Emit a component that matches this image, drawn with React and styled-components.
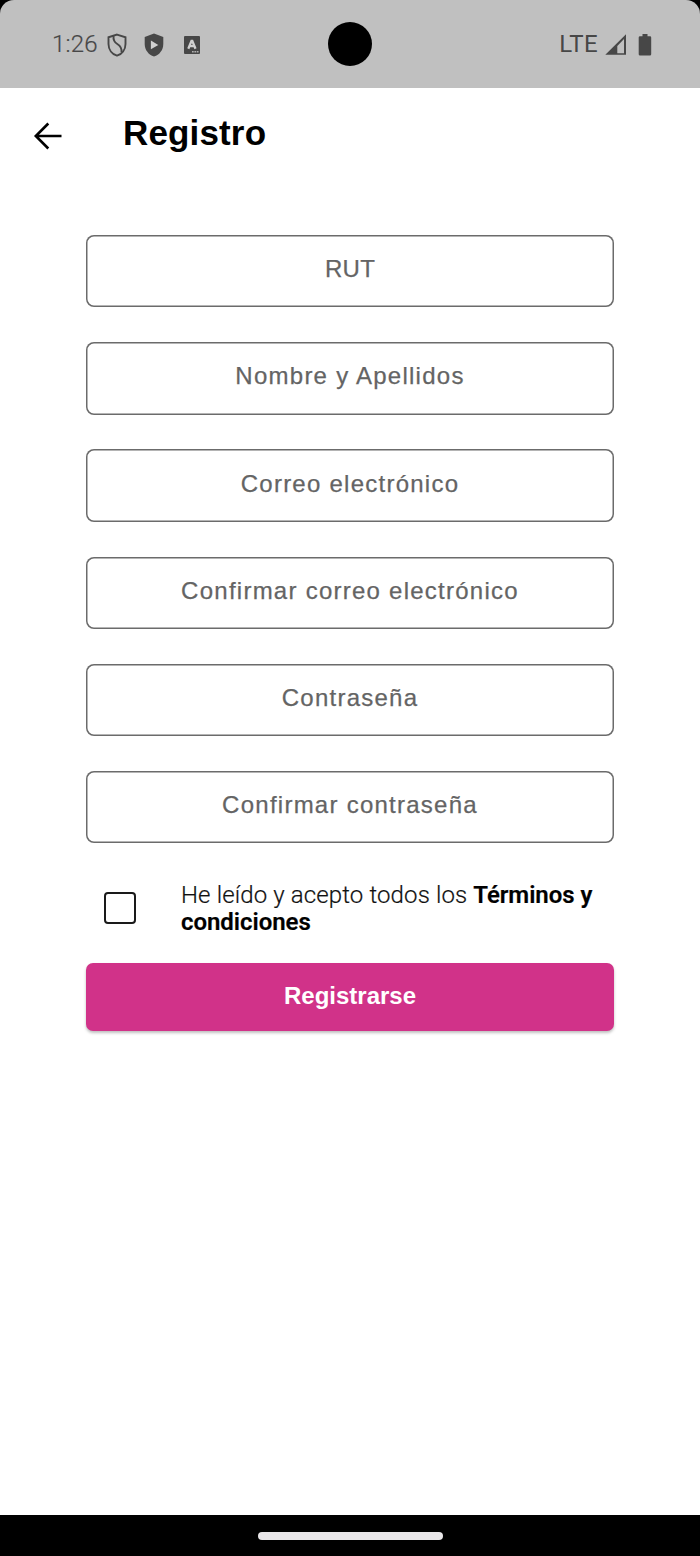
import styled, { createGlobalStyle } from 'styled-components'

const GlobalStyle = createGlobalStyle`
    * {
        box-sizing: border-box;
    }

    body {
        margin: 0;
        background: #000;
    }
`

const Screen = styled.div`
    display: flex;
    flex-direction: column;
    width: 700px;
    height: 1556px;
    overflow: hidden;
    background: #000;
    font-family: "Liberation Sans", Arial, sans-serif;
`

const StatusBar = styled.header`
    display: grid;
    grid-template-columns: 1fr 44px 1fr;
    align-items: center;
    flex: none;
    height: 88px;
    padding: 0 48px 0 52px;
    background: #c0c0c0;
    border-radius: 14px 14px 0 0;
    color: #474747;
    font-family: Roboto, sans-serif;
`

const StatusGroup = styled.div`
    display: flex;
    align-items: center;
    justify-content: ${({ $end }) => ($end ? 'flex-end' : 'flex-start')};

    svg {
        display: block;
        flex: none;
    }
`

const Clock = styled.span`
    width: 55px;
    font-size: 24px;
    font-weight: 300;
    line-height: 28px;
    letter-spacing: 0.2px;
    -webkit-text-stroke: 0.2px #474747;
`

const Network = styled.span`
    margin-right: 7px;
    font-size: 24px;
    line-height: 28px;
    letter-spacing: 0.4px;
`

const Camera = styled.div`
    width: 44px;
    height: 44px;
    margin-left: -2px;
    border-radius: 50%;
    background: #000;
`

const Content = styled.main`
    flex: 1;
    background: #fff;
`

const TopBar = styled.div`
    display: flex;
    align-items: center;
    gap: 60px;
    height: 95px;
    padding-left: 33px;
`

const BackButton = styled.button`
    display: flex;
    width: 30px;
    height: 30px;
    padding: 0;
    border: 0;
    background: none;
`

const Title = styled.h1`
    margin: 0 0 6px;
    color: #000;
    font-size: 35px;
    font-weight: 700;
    line-height: 40px;
    letter-spacing: 0.15px;
`

const Form = styled.div`
    display: flex;
    flex-direction: column;
    width: 528px;
    margin: 52px auto 0;
`

const Fields = styled.div`
    display: flex;
    flex-direction: column;
    gap: 34.8px;
`

const Field = styled.div`
    display: flex;
    align-items: center;
    justify-content: center;
    height: 72.4px;
    padding-bottom: 4px;
    border-radius: 8px;
    box-shadow: inset 0 0 0 1.5px #6b6b6b;
    color: #646464;
    font-size: 24px;
    line-height: 28px;
    letter-spacing: ${({ $tight }) => ($tight ? '0.3px' : '1.25px')};
    -webkit-text-stroke: 0.25px #646464;
`

const Terms = styled.div`
    display: flex;
    align-items: center;
    height: 54px;
    margin-top: 38px;
    padding-left: 18px;
`

const Checkbox = styled.div`
    flex: none;
    width: 32px;
    height: 32px;
    margin-right: 45px;
    border: 2px solid #1a1a1a;
    border-radius: 4px;
`

const TermsText = styled.p`
    margin: 2px 0 0;
    color: #111;
    font-family: Roboto, sans-serif;
    font-size: 24px;
    font-weight: 300;
    line-height: 27px;
    letter-spacing: 0.13px;
    white-space: nowrap;
    -webkit-text-stroke: 0.2px #111;

    b {
        color: #000;
        font-weight: 600;
        letter-spacing: -0.05px;
    }
`

const SubmitButton = styled.button`
    height: 68px;
    margin-top: 28px;
    padding: 0 0 3px;
    border: 0;
    border-radius: 7px;
    background: #d13289;
    box-shadow: 0 2px 3px rgba(0, 0, 0, 0.25);
    color: #fff;
    font-family: inherit;
    font-size: 24px;
    font-weight: 700;
`

const NavBar = styled.footer`
    display: flex;
    align-items: center;
    justify-content: center;
    flex: none;
    height: 41px;
    background: #000;
`

const HomeHandle = styled.div`
    width: 185px;
    height: 8px;
    border-radius: 4px;
    background: #e9e7e9;
`

const campos = [
    'RUT',
    'Nombre y Apellidos',
    'Correo electrónico',
    'Confirmar correo electrónico',
    'Contraseña',
    'Confirmar contraseña',
]

const ShieldOutline = () => (
    <svg width="20" height="24" viewBox="0 0 20 24" fill="none" stroke="#474747" strokeWidth="1.9">
        <path d="M10 1.6 18.5 4.3V11C18.5 16.5 15 21.1 10 22.7 5 21.1 1.5 16.5 1.5 11V4.3Z" />
        <path d="M6.600 3C6 7 7 9 10.300 11 14 13.300 15 15.400 14.500 19.300" />
    </svg>
)

const ShieldPlay = () => (
    <svg width="20" height="24" viewBox="0 0 20 24">
        <path fill="#474747" d="M10 .5 19.3 4V11C19.3 17 15.5 21.8 10 23.5 4.5 21.8.7 17 .7 11V4Z" />
        <path fill="#d0d0d0" d="M6.9 7.5V16.2L14.3 11.9Z" />
    </svg>
)

const LetterBadge = () => (
    <svg width="16" height="18" viewBox="0 0 16 18">
        <rect width="16" height="18" rx="1" fill="#474747" />
        <path d="M4.3 12.8 7.5 5H8.3L11.5 12.8M5.5 10.2H10.3" fill="none" stroke="#d0d0d0" strokeWidth="2.3" />
        <path d="M8 15.8H15" stroke="#b0b0b0" strokeWidth="1.5" strokeDasharray="1.7 .7" />
    </svg>
)

const Signal = () => (
    <svg width="22" height="22" viewBox="0 0 22 22">
        <path fill="#474747" fillRule="evenodd" d="M.3 20.8 21 .3V20.8ZM12.3 12V19.200H19V5Z" />
    </svg>
)

const Battery = () => (
    <svg width="14" height="22" viewBox="0 0 14 22">
        <path fill="#474747" d="M4.5 0H9.5V2.2H12Q13.2 2.2 13.2 3.4V20.3Q13.2 21.500 12 21.500H2Q.7 21.500.7 20.300V3.400Q.7 2.200 2 2.200H4.500Z" />
    </svg>
)

const StatusIcons = styled.div`
    display: flex;
    align-items: center;
    gap: ${({ $gap }) => $gap}px;
    padding-top: ${({ $top }) => $top}px;
`

const App = () => {

    return (
        <Screen>
            <GlobalStyle />

            <StatusBar>
                <StatusGroup>
                    <Clock>1:26</Clock>
                    <StatusIcons $gap={20} $top={1}>
                        <StatusIcons $gap={17} $top={0}>
                            <ShieldOutline />
                            <ShieldPlay />
                        </StatusIcons>
                        <LetterBadge />
                    </StatusIcons>
                </StatusGroup>

                <Camera />

                <StatusGroup $end>
                    <Network>LTE</Network>
                    <StatusIcons $gap={11} $top={1}>
                        <Signal />
                        <Battery />
                    </StatusIcons>
                </StatusGroup>
            </StatusBar>

            <Content>
                <TopBar>
                    <BackButton aria-label="Volver">
                        <svg width="30" height="30" viewBox="0 0 30 30" fill="none" stroke="#000" strokeWidth="2.6">
                            <path d="M28.5 15H3M15.3 2.5 2.8 15 15.3 27.5" />
                        </svg>
                    </BackButton>
                    <Title>Registro</Title>
                </TopBar>

                <Form>
                    <Fields>
                        {campos.map((campo) => (
                            <Field key={campo} $tight={campo === 'RUT'}>{campo}</Field>
                        ))}
                    </Fields>

                    <Terms>
                        <Checkbox />
                        <TermsText>
                            He leído y acepto todos los <b>Términos y<br />condiciones</b>
                        </TermsText>
                    </Terms>

                    <SubmitButton>Registrarse</SubmitButton>
                </Form>
            </Content>

            <NavBar>
                <HomeHandle />
            </NavBar>
        </Screen>
    )
}

export default App
